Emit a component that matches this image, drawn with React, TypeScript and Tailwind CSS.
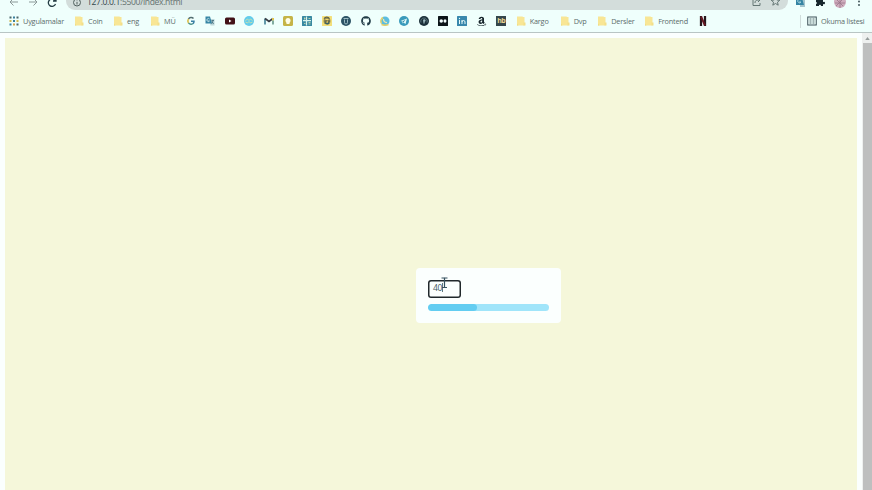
import type { ReactNode } from "react";
import { FaGithub, FaAmazon } from "react-icons/fa";

function Svg({ children, className = "" }: { children: ReactNode; className?: string }) {
  return (
    <svg viewBox="0 0 20 20" className={`size-[10px] shrink-0 ${className}`} fill="none">
      {children}
    </svg>
  );
}

function Folder() {
  return (
    <Svg>
      <path d="M2 1h11l1 1h3v17H2z" fill="#f8e695" />
      <path d="M15 13h4v6h-4z" fill="#f3df89" />
      <path d="M2 15v4h3z" fill="#eedb80" />
    </Svg>
  );
}

function Item({ width, icon, label }: { width: string; icon: ReactNode; label?: string }) {
  return (
    <div className={`flex shrink-0 items-center ${width}`}>
      {icon}
      {label && <span className="ml-[4px] whitespace-nowrap">{label}</span>}
    </div>
  );
}

const appColors = ["#4b6668", "#397f9d", "#4b6668", "#d1b94c", "#397f9d", "#d1b94c", "#397f9d", "#d1a34c", "#4b6668"];

const siteIcons: ReactNode[] = [
  <Svg key="google">
    <path d="M15 5A6.500 6.500 0 0 0 5 6" stroke="#536e70" strokeWidth="3" />
    <path d="M5 6a7 7 0 0 0 0 8" stroke="#d9bd45" strokeWidth="3" />
    <path d="M5 14a7 7 0 0 0 9 1" stroke="#4b9188" strokeWidth="3" />
    <path d="M10 10.500h6c0 2-1 4-2 5" stroke="#397fa5" strokeWidth="3" />
  </Svg>,
  <Svg key="translate">
    <path d="M8 6h11v13h-8z" fill="#bdd7da" />
    <path d="M1 1h9l4 14H1z" fill="#3685a4" />
    <path d="M9 6a3 3 0 1 0 0 4H6" stroke="#c8e4e8" strokeWidth="1.8" />
    <path d="M13 9h5m-2 0c-1 4-2 5-3 6m1-4 3 5" stroke="#466e7b" strokeWidth="1.7" />
  </Svg>,
  <Svg key="video">
    <rect y="3" width="20" height="14" rx="3" fill="#421218" />
    <path d="m8 7 5 3-5 3z" fill="#fff" />
  </Svg>,
  <Svg key="blue">
    <circle cx="10" cy="10" r="10" fill="#62cceb" />
    <path d="m3 9 4-3 3 3 3-3 4 3M3 12l4 2 3-3 3 3 4-2" stroke="#cfe1a8" strokeWidth="1.8" />
  </Svg>,
  <Svg key="mail">
    <path d="M2 17V5" stroke="#35788f" strokeWidth="3" />
    <path d="m2 5 8 6 8-6" stroke="#383d44" strokeWidth="3.5" />
    <path d="M18 4v5" stroke="#dfc551" strokeWidth="4" />
    <path d="M18 9v8" stroke="#5c9183" strokeWidth="3" />
  </Svg>,
  <Svg key="keep">
    <rect width="20" height="20" rx="3" fill="#c5b447" />
    <circle cx="10" cy="9" r="5" fill="#fffde7" />
    <path d="M7 12h6v4H7z" fill="#fffde7" />
  </Svg>,
  <Svg key="grid">
    <rect width="20" height="20" rx="1" fill="#3889a2" />
    <path d="M9 1v18M2 9h16" stroke="#d8f3ed" strokeWidth="2.500" />
    <path d="M4 5h3m6 0h4M5 3v4M13 13h4m-4 3h4M4 15h3" stroke="#c8d9ad" strokeWidth="1.700" />
  </Svg>,
  <Svg key="yellow">
    <rect width="20" height="20" rx="1" fill="#f3df7a" />
    <circle cx="10" cy="10" r="7" fill="#9c9350" />
    <path d="M4 5c3-4 8-4 11 0M5 10h5m2 0h4" stroke="#5b604b" strokeWidth="2.500" />
    <path d="M6 13q5 5 8 0" stroke="#35606b" strokeWidth="3" />
    <path d="M7 7h6M9 12h3" stroke="#f4d76b" strokeWidth="2" />
  </Svg>,
  <Svg key="u">
    <circle cx="10" cy="10" r="10" fill="#2c5365" />
    <path d="M7 7v6q0 3 3 3t3-3V7M5 5h10" stroke="#a9c6cd" strokeWidth="1.800" />
  </Svg>,
  <FaGithub key="github" className="size-[10px] text-[#223c47]" />,
  <Svg key="chat">
    <circle cx="10" cy="10" r="9" fill="#5bbde0" />
    <path d="M3 15a9 9 0 0 1 3-12" stroke="#ebd36a" strokeWidth="3" />
    <path d="M7 6c0 5 2 7 7 7" stroke="#f2e9a9" strokeWidth="2.500" />
    <path d="M3 17q7 3 14 0" stroke="#e6cf69" strokeWidth="3" />
  </Svg>,
  <Svg key="telegram">
    <circle cx="10" cy="10" r="10" fill="#3a9abb" />
    <path d="m3 10 13-5-3 11-4-3-2 2v-4z" fill="#e3faf8" />
    <path d="m7 11 6-4-4 6" fill="#3989a7" />
  </Svg>,
  <Svg key="dark">
    <circle cx="10" cy="10" r="10" fill="#1b3039" />
    <path d="M4 13a6.500 6.500 0 1 1 12 0" stroke="#819da5" strokeWidth="1.2" />
    <circle cx="10.500" cy="9" r="2.500" fill="#9db9bf" />
    <path d="M10 10v5" stroke="#9db9bf" strokeWidth="2.500" />
  </Svg>,
  <Svg key="medium">
    <rect width="20" height="20" rx="1" fill="#0c1519" />
    <circle cx="6.500" cy="10" r="3.500" fill="#f4ffff" />
    <ellipse cx="14" cy="10" rx="3" ry="3.500" fill="#f4ffff" />
  </Svg>,
  <Svg key="linkedin">
    <rect width="20" height="20" rx="1" fill="#3988ad" />
    <path d="M5 8v8m5 0V8m0 4q0-3 3-3t3 3v4" stroke="#e7fbfa" strokeWidth="2" />
    <circle cx="5" cy="5" r="1.300" fill="#e7fbfa" />
  </Svg>,
  <span key="amazon" className="flex size-[10px] justify-center overflow-hidden">
    <FaAmazon className="size-[11px] shrink-0 text-[#17252b]" />
  </span>,
  <span key="hb" className="flex size-[10px] items-center justify-center bg-[#34464b] text-[7px] font-bold tracking-[-0.5px] text-[#e9d591]">hb</span>,
];

function Toolbar() {
  return (
    <div className="flex h-[10px] items-start overflow-hidden bg-[#effffc]">
      <div className="flex w-[66px] shrink-0 pl-[8px]">
        <svg viewBox="0 0 58 10" className="h-[10px] w-[58px]" fill="none" stroke="#8b9998" strokeWidth="1">
          <path d="M10 2H2m3.500-3.500L2 2l3.500 3.500M21 2h8m-3.500-3.500L29 2l-3.500 3.500" />
          <path d="M47 .5A3.700 3.700 0 1 0 47.500 4M48-2v3h-3" stroke="#243c43" strokeWidth="1.300" />
        </svg>
      </div>
      <div className="flex h-[10px] w-[722px] shrink-0 rounded-b-[9px] bg-[#d3dddb] pl-[7px]">
        <svg viewBox="0 0 8 10" className="h-[10px] w-[8px] shrink-0" fill="none" stroke="#52605f">
          <circle cx="4" cy="2.500" r="3.500" />
          <path d="M4 2v2.500M4 .5v.7" />
        </svg>
        <span className="-mt-[4px] ml-[6px] h-[13px] w-[664px] shrink-0 text-[8.600px] leading-[13px] tracking-[-0.360px] text-[#667371]">
          <span className="text-[#34484c]">127.0.0.1</span>:5500/index.html
        </span>
        <svg viewBox="0 0 34 10" className="h-[10px] w-[34px] shrink-0" fill="none" stroke="#647674" strokeWidth="1">
          <path d="M4-1H2v6.500h7V3M4 3c0-3 2-3 5-3M7-2l2 2-2 2" />
          <path d="m24.500-3 1.300 3 3 .2-2.300 2 .7 3-2.700-1.700-2.700 1.700.7-3-2.300-2 3-.2z" />
        </svg>
      </div>
      <svg viewBox="0 0 84 10" className="h-[10px] w-[84px] shrink-0">
        <path d="M12 0h5v7h-5z" fill="#a4c5cd" />
        <path d="M8-2h6l2 7H8z" fill="#3685a4" />
        <path d="M13 0a1.800 1.800 0 1 0 0 2h-2" stroke="#b8dfe6" strokeWidth=".8" fill="none" />
        <path d="M28 0h2q-1-2 1-2t1 2h3v2q2-1 2 1t-2 1v2h-2q0-2-2-1v1h-3V4q2-1 0-2z" fill="#17272d" />
        <circle cx="52" cy="2" r="6" fill="#cfacbd" />
        <path d="m48-1 7 7m0-7-7 7m4-8v10m-5-5h10" stroke="#9a778a" strokeWidth=".8" />
        <circle cx="71" cy="1.500" r=".9" fill="#34484c" />
        <circle cx="71" cy="5" r=".9" fill="#34484c" />
      </svg>
    </div>
  );
}

function Bookmarks() {
  return (
    <div className="flex h-[23px] items-center border-b border-[#b9c5c4] bg-[#effffc] pl-[9px] text-[7.300px] leading-[10px] tracking-[-0.180px] text-[#5b6b6a]">
      <Item
        width="w-[65px]"
        label="Uygulamalar"
        icon={
          <Svg>
            {appColors.map((color, i) => (
              <rect key={i} x={1 + (i % 3) * 7} y={1 + Math.floor(i / 3) * 7} width="4" height="4" fill={color} />
            ))}
          </Svg>
        }
      />
      <Item width="w-[39px]" icon={<Folder />} label="Coin" />
      <Item width="w-[37px]" icon={<Folder />} label="eng" />
      <Item width="w-[36px]" icon={<Folder />} label="MÜ" />
      {siteIcons.map((icon, i) => (
        <Item key={i} width="w-[19.400px]" icon={icon} />
      ))}
      <Item width="w-[44px]" icon={<Folder />} label="Kargo" />
      <Item width="w-[37.500px]" icon={<Folder />} label="Dvp" />
      <Item width="w-[47px]" icon={<Folder />} label="Dersler" />
      <Item width="w-[54px]" icon={<Folder />} label="Frontend" />
      <Svg>
        <path d="M6 0v20M14 0v20" stroke="#25171c" strokeWidth="4.500" />
        <path d="m6 1 8 18" stroke="#671923" strokeWidth="4" />
      </Svg>
      <div className="ml-auto flex h-[13px] items-center border-l border-[#d0dddb] pr-[8px] pl-[6px]">
        <Svg>
          <rect x="1.500" y="2" width="17" height="16" stroke="#3c5056" strokeWidth="2" />
          <path d="M5 6h4m2 0h4M5 10h4m2 0h4M5 14h4m2 0h4" stroke="#3c5056" strokeWidth="1.700" />
        </Svg>
        <span className="ml-[4px] w-[43px] whitespace-nowrap">Okuma listesi</span>
      </div>
    </div>
  );
}

export default function App() {
  return (
    <div className="flex h-[490px] w-[872px] flex-col overflow-hidden bg-[#fbfffe] font-['Open_Sans','Noto_Sans',sans-serif]">
      <Toolbar />
      <Bookmarks />
      <main className="flex min-h-0 flex-1">
        <div className="mt-[5px] mr-[5px] ml-[5px] flex-1 bg-[#f5f7da] pt-[229.500px] pl-[411px]">
          <section className="h-[55.500px] w-[145px] rounded-[4px] bg-[#fbfffe] px-[12px] pt-[12px]">
            <div className="relative flex h-[18px] w-[33px] items-center rounded-[3px] bg-[#fbfffe] pb-[2px] pl-[5px] text-[8.500px] leading-[10px] tracking-[-0.300px] text-[#405860] inset-ring-[1.500px] inset-ring-[#20282b]">
              40
              <span className="h-[9px] w-px bg-[#62777c]" />
              <svg viewBox="0 0 7 12" className="absolute top-[-3px] left-[13px] h-[12px] w-[7px]" fill="none" stroke="#36515e">
                <path d="M.5 1H3l.5.5L4 1h2.500M3.500 1.500v9M1 10.500h5" strokeWidth="1.200" />
              </svg>
            </div>
            <div className="mt-[6px] h-[7.500px] w-[121px] overflow-hidden rounded-full bg-[#a0e5fa]">
              <div className="h-full w-[40.500%] rounded-full bg-[#63cdf1]" />
            </div>
          </section>
        </div>
        <div className="flex w-[10px] flex-col bg-[#eef0ef] pl-px">
          <div className="flex h-[10px] items-center justify-center">
            <svg viewBox="0 0 6 4" className="h-[3px] w-[5px]"><path d="m0 4 3-4 3 4z" fill="#969c9b" /></svg>
          </div>
          <div className="flex-1 bg-[#bebfbf]" />
        </div>
      </main>
    </div>
  );
}
